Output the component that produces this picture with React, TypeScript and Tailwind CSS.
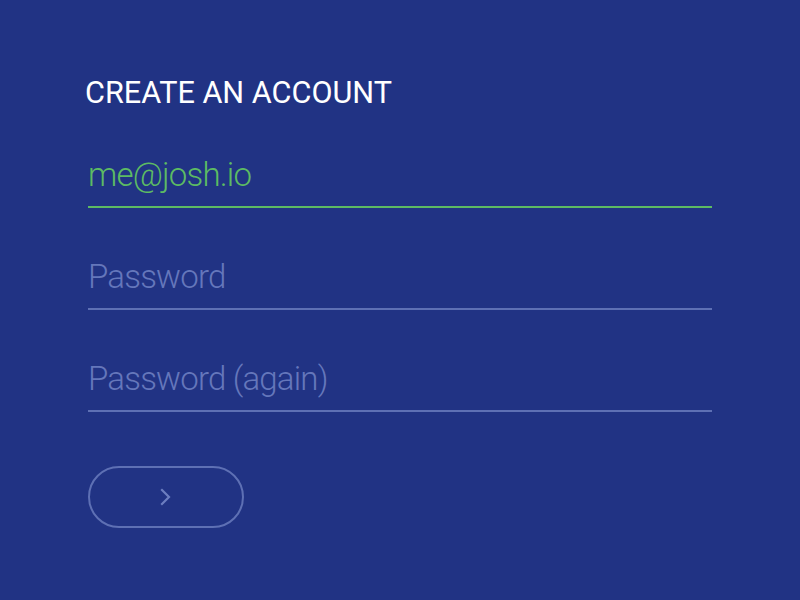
import React from "react";

export default function App() {
  const font = { fontFamily: "Roboto, 'Liberation Sans', sans-serif" };
  return (
    <div className="w-[800px] h-[600px] bg-[#213384] overflow-hidden" style={font}>
      <div className="pt-[75px] pl-[88px] flex flex-col">
        <h1 className="-ml-[3px] text-white text-[30.6px] leading-[36px] font-normal">CREATE AN ACCOUNT</h1>
        <div className="mt-[39px] flex flex-col gap-[44px] w-[624px]">
          <input
            readOnly
            defaultValue="me@josh.io"
            className="h-[58px] pb-2 border-b-2 border-[#5dbb63] bg-transparent outline-none text-[33px] tracking-[-0.8px] font-light text-[#5dbb63]"
          />
          <input
            type="text"
            placeholder="Password"
            className="h-[58px] pb-2 border-b-2 border-[#5e70b4] bg-transparent outline-none text-[33px] tracking-[-0.8px] font-light text-white placeholder:text-[#6577bb]"
          />
          <input
            type="text"
            placeholder="Password (again)"
            className="h-[58px] pb-2 border-b-2 border-[#5e70b4] bg-transparent outline-none text-[33px] tracking-[-0.8px] font-light text-white placeholder:text-[#6577bb]"
          />
        </div>
        <button className="mt-[54px] w-[156px] h-[62px] rounded-full border-2 border-[#5e70b4] flex items-center justify-center">
          <svg width="16" height="20" viewBox="0 0 16 20" fill="none" stroke="#6c7ec0" strokeWidth="2.2" strokeLinecap="square">
            <path d="M4 3l7 7-7 7" />
          </svg>
        </button>
      </div>
    </div>
  );
}
